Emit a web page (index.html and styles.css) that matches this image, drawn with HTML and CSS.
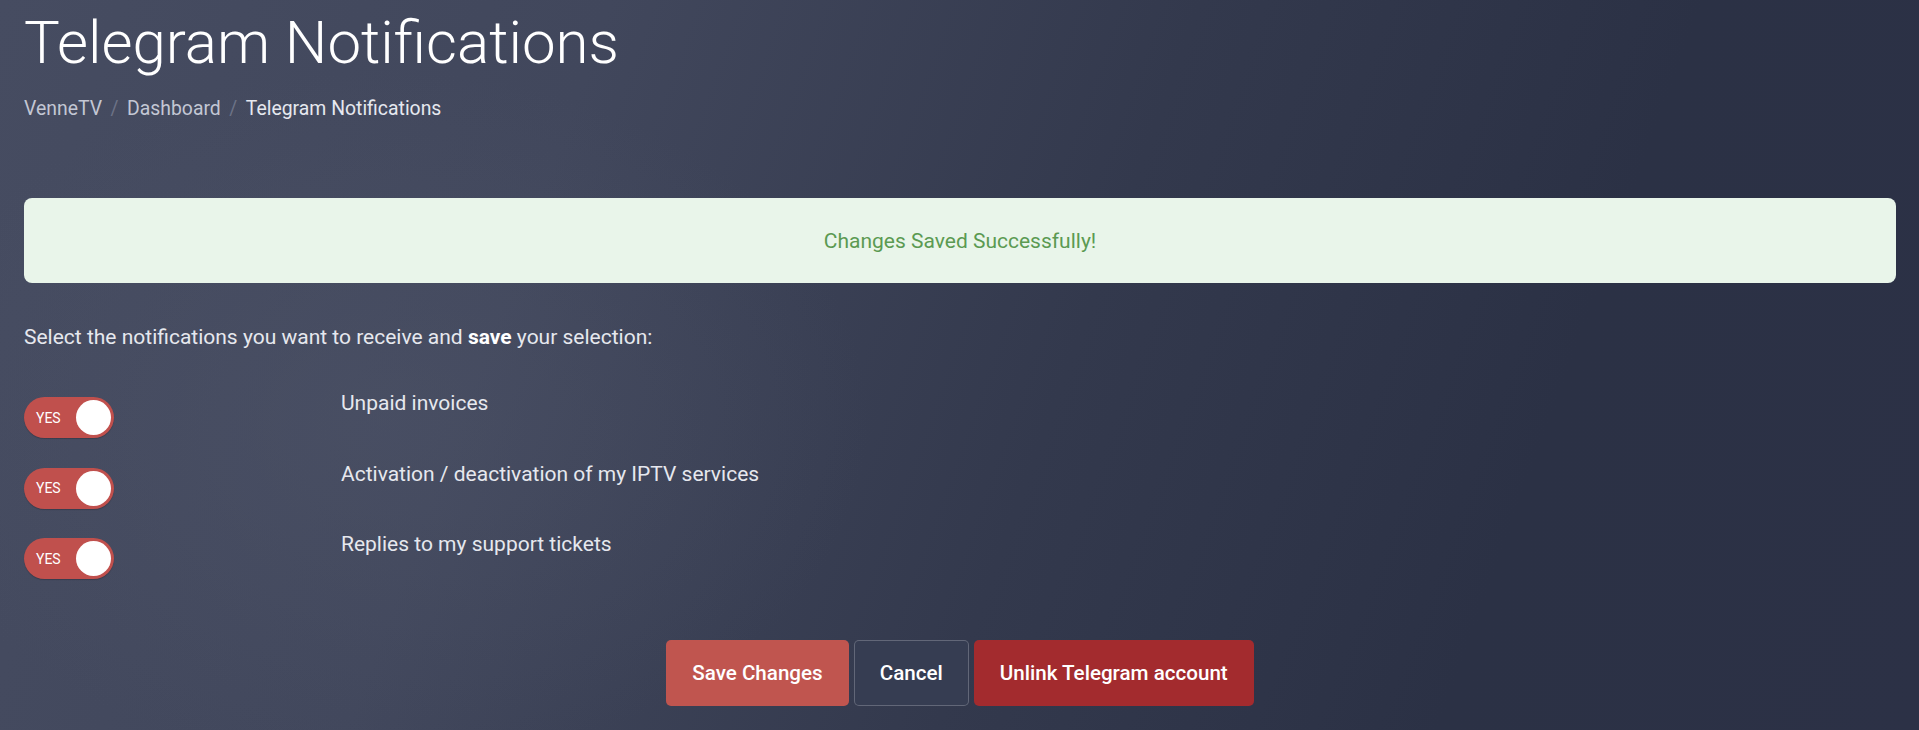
FILE: index.html
```html
<!DOCTYPE html>
<html lang="en">
<head>
<meta charset="utf-8">
<title>Telegram Notifications</title>
<link rel="stylesheet" href="styles.css">
</head>
<body>
<div class="page">
  <header class="page-header">
    <h1 class="page-title">Telegram Notifications</h1>
    <nav class="breadcrumb">
      <a class="crumb" href="#">VenneTV</a>
      <span class="sep">/</span>
      <a class="crumb" href="#">Dashboard</a>
      <span class="sep">/</span>
      <span class="crumb current">Telegram Notifications</span>
    </nav>
  </header>

  <div class="alert-success">Changes Saved Successfully!</div>

  <p class="intro">Select the notifications you want to receive and <strong>save</strong> your selection:</p>

  <div class="options">
    <div class="option">
      <span class="toggle"><span class="toggle-label">YES</span><span class="knob"></span></span>
      <span class="option-label">Unpaid invoices</span>
    </div>
    <div class="option">
      <span class="toggle"><span class="toggle-label">YES</span><span class="knob"></span></span>
      <span class="option-label">Activation / deactivation of my IPTV services</span>
    </div>
    <div class="option">
      <span class="toggle"><span class="toggle-label">YES</span><span class="knob"></span></span>
      <span class="option-label">Replies to my support tickets</span>
    </div>
  </div>

  <div class="actions">
    <button class="btn btn-save">Save Changes</button>
    <button class="btn btn-cancel">Cancel</button>
    <button class="btn btn-unlink">Unlink Telegram account</button>
  </div>
</div>
</body>
</html>
```

FILE: styles.css
```css
html, body {
  margin: 0;
  padding: 0;
}

body {
  width: 1919px;
  height: 730px;
  overflow: hidden;
  font-family: Roboto, "Liberation Sans", sans-serif;
  font-size: 21px;
  color: #e6e8ee;
  background:
    radial-gradient(ellipse 700px 500px at 380px 420px, rgba(80, 86, 106, 0.45), rgba(80, 86, 106, 0) 70%),
    linear-gradient(110deg, #464c61 0%, #41475c 28%, #33394d 55%, #2b3145 78%, #2c3146 100%);
}

.page {
  padding: 0 23px 0 24px;
}

.page-title {
  margin: 0;
  padding-top: 7px;
  font-weight: 300;
  font-size: 60px;
  line-height: 72px;
  color: #ffffff;
}

.breadcrumb {
  margin-top: 16px;
  font-size: 19.4px;
  line-height: 28px;
  display: flex;
  gap: 8.5px;
}

.crumb {
  color: #c3c7d4;
  text-decoration: none;
}

.crumb.current {
  color: #e6e8ef;
}

.sep {
  color: #6d7387;
}

.alert-success {
  margin-top: 75px;
  height: 85px;
  border-radius: 8px;
  background: #e9f5ea;
  color: #5b9a52;
  display: flex;
  align-items: center;
  justify-content: center;
}

.intro {
  margin: 40px 0 0;
  line-height: 28px;
}

.intro strong {
  font-weight: 700;
  color: #ffffff;
}

.options {
  margin-top: 37px;
}

.option {
  display: grid;
  grid-template-columns: 317px 1fr;
  align-items: start;
  height: 70.5px;
}

.option-label {
  margin-top: 1px;
  line-height: 28px;
}

.toggle {
  margin-top: 9px;
  width: 90px;
  height: 41px;
  border-radius: 21px;
  background: #c0504d;
  box-shadow: 0 1px 1px rgba(0, 0, 0, 0.2);
  display: flex;
  align-items: center;
  justify-content: space-between;
  padding: 0 3px 0 12px;
  box-sizing: border-box;
}

.toggle-label {
  font-size: 14px;
  color: #ffffff;
}

.knob {
  width: 35px;
  height: 35px;
  border-radius: 50%;
  background: #ffffff;
}

.actions {
  margin-top: 40px;
  display: flex;
  justify-content: center;
  gap: 5px;
}

.btn {
  height: 66px;
  padding: 0 25px;
  border-radius: 5px;
  border: 1px solid transparent;
  font-family: Roboto, "Liberation Sans", sans-serif;
  font-size: 20.6px;
  font-weight: 500;
  color: #ffffff;
  cursor: pointer;
}

.btn-save {
  background: #c0554f;
}

.btn-cancel {
  background: #363d52;
  border-color: rgba(255, 255, 255, 0.22);
}

.btn-unlink {
  background: #a32b2e;
}
```
